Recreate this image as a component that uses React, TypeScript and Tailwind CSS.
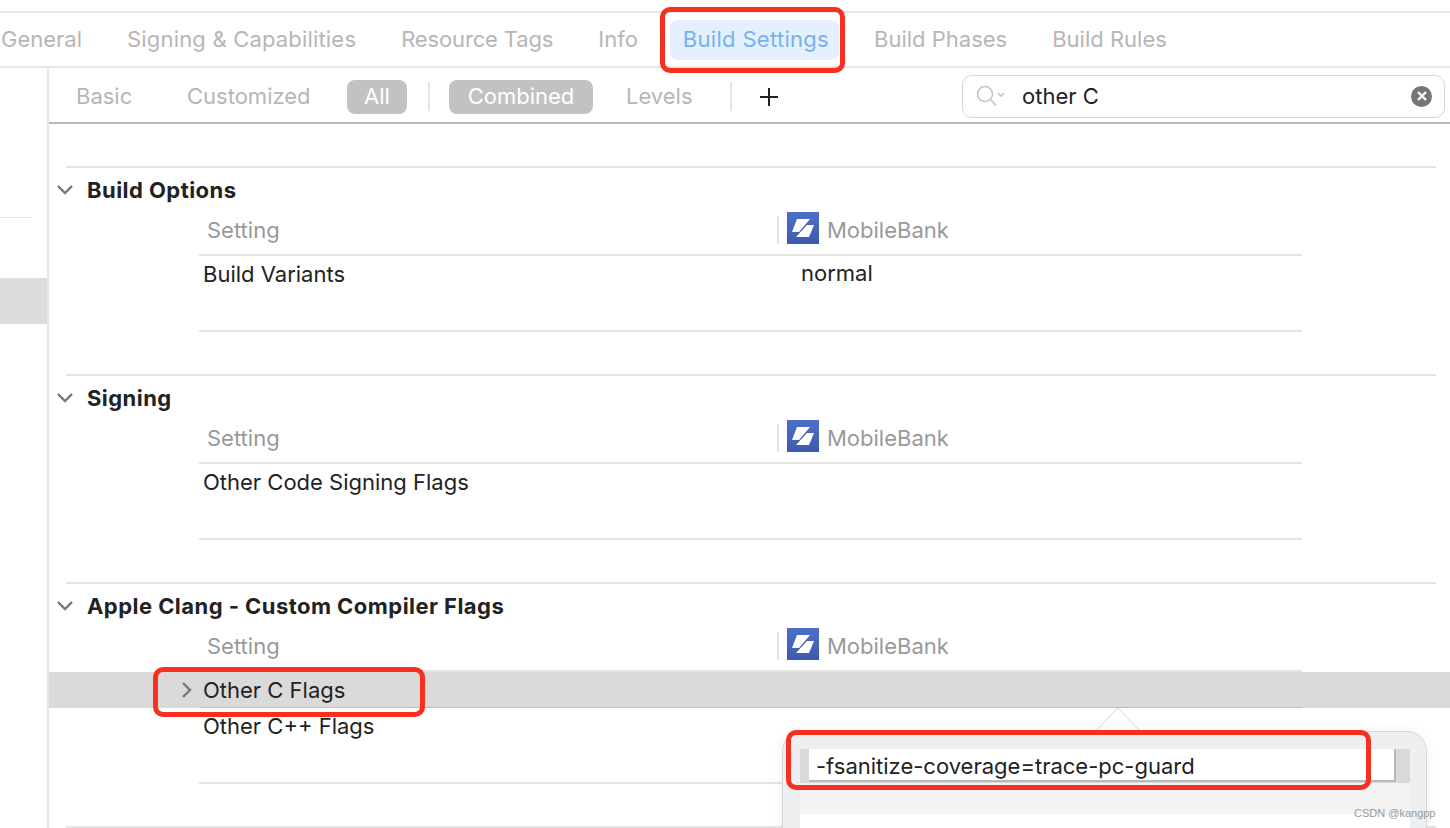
import React from "react";

const tabs = ["General", "Signing & Capabilities", "Resource Tags", "Info", "Build Settings", "Build Phases", "Build Rules"];

function Logo() {
  return (
    <svg width="32" height="32" viewBox="0 0 32 32" className="shrink-0">
      <defs>
        <linearGradient id="logo-bg" x1="0" y1="0" x2="0" y2="1">
          <stop offset="0" stopColor="#4c70c8" />
          <stop offset="1" stopColor="#3f5aae" />
        </linearGradient>
      </defs>
      <rect width="32" height="32" fill="url(#logo-bg)" />
      <path d="M10 7H23L12 20H5Z" fill="#fff" />
      <path d="M22 25H9L20 13H27Z" fill="#fff" />
    </svg>
  );
}

function Chevron({ open }: { open?: boolean }) {
  return (
    <svg width="18" height="18" viewBox="0 0 18 18" fill="none" stroke="#777" strokeWidth="2.4">
      {open ? <path d="M2 5l7 7 7-7" /> : <path d="M5 2l7 7-7 7" />}
    </svg>
  );
}

function TableHead() {
  return (
    <div className="ml-[150px] w-[1103px] h-[44px] pb-[6px] flex items-center border-b-2 border-[#e4e4e4] text-[#999]">
      <div className="w-[578px] pl-[8px]">Setting</div>
      <div className="w-[2px] h-[28px] bg-[#e4e4e4]" />
      <div className="ml-[8px] mr-[8px] -mt-[4px]">
        <Logo />
      </div>
      <div>MobileBank</div>
    </div>
  );
}

function Section({ title, children }: { title: string; children: React.ReactNode }) {
  return (
    <section className="mb-[43px]">
      <div className="-mt-[1px] mx-[17px] w-[1370px] border-t-2 border-[#e4e4e4] h-[46px] flex items-center font-bold tracking-[0.45px] text-[#222]">
        <div className="w-[31px] -ml-[10px] flex">
          <Chevron open />
        </div>
        {title}
      </div>
      <TableHead />
      {children}
    </section>
  );
}

function Row({ name, value }: { name: string; value?: string }) {
  return (
    <div className="ml-[150px] w-[1103px] h-[76px] pt-[4px] flex border-b-2 border-[#e4e4e4] text-[#222] leading-[28px]">
      <div className="w-[602px] pl-[4px]">{name}</div>
      {value && <div className="-mt-[1px]">{value}</div>}
    </div>
  );
}

function tabClass(t: string) {
  if (t === "Build Settings")
    return "pl-[13px] pr-[10px] mr-[3px] h-[40px] flex items-center rounded-[8px] bg-[#e4f0fd] text-[#79b1ef] tracking-[0.3px]";
  if (t === "Signing & Capabilities") return "px-[13px] h-[40px] flex items-center tracking-[0.18px]";
  if (t === "Resource Tags") return "px-[13px] h-[40px] flex items-center tracking-[-0.15px]";
  return "px-[13px] h-[40px] flex items-center";
}

export default function App() {
  return (
    <div className="relative h-[828px] w-[1450px] overflow-hidden bg-white font-['Inter','Liberation_Sans',sans-serif] text-[22px]">
      <div className="h-[11px]" />
      <nav className="h-[57px] border-y-2 border-[#e6e6e6] flex items-center gap-[19px] -ml-[12px] text-[#b6b6b6]">
        {tabs.map((t) => (
          <div key={t} className={tabClass(t)}>
            {t}
          </div>
        ))}
      </nav>
      <div className="flex h-[760px]">
        <aside className="w-[49px] shrink-0 border-r-2 border-[#e6e6e6] pt-[149px]">
          <div className="w-[31px] border-t border-[#e4e4e4]" />
          <div className="mt-[60px] h-[46px] bg-[#dcdcdc]" />
        </aside>
        <main className="flex-1 min-w-0">
          <div className="h-[56px] pt-[2px] border-b-2 border-[#b9b9b9] flex items-center text-[#b6b6b6]">
            <div className="ml-[27px] w-[111px]">Basic</div>
            <div className="w-[160px]">Customized</div>
            <div className="mt-[2px] pb-[2px] w-[60px] h-[34px] rounded-[8px] bg-[#c2c2c3] text-white flex items-center justify-center">All</div>
            <div className="ml-[21px] w-[2px] h-[29px] bg-[#e6e6e6]" />
            <div className="mt-[2px] pb-[2px] ml-[19px] w-[144px] h-[34px] rounded-[8px] bg-[#c2c2c3] text-white flex items-center justify-center">Combined</div>
            <div className="ml-[33px] w-[104px]">Levels</div>
            <div className="w-[2px] h-[29px] bg-[#e6e6e6]" />
            <svg width="18" height="18" viewBox="0 0 18 18" className="mt-[2px] ml-[28px]" stroke="#222" strokeWidth="2">
              <path d="M9 0v18M0 9h18" />
            </svg>
            <div className="ml-[184px] w-[483px] h-[43px] rounded-[10px] border border-[#d6d6d6] flex items-center text-[#222]">
              <svg width="32" height="24" viewBox="0 0 32 24" className="ml-[12px] mr-[15px]" fill="none" stroke="#c4c4c4" strokeWidth="1.600">
                <circle cx="10" cy="10" r="7.500" />
                <path d="M15.500 15.500l5.500 6M23 9l3 3 3-3" />
              </svg>
              other C
              <div className="ml-auto mr-[12px] w-[21px] h-[21px] rounded-full bg-[#757575] flex items-center justify-center">
                <svg width="10" height="10" viewBox="0 0 10 10" stroke="#fff" strokeWidth="2.400">
                  <path d="M1 1l8 8M9 1l-8 8" />
                </svg>
              </div>
            </div>
          </div>
          <div className="pt-[43px]">
            <Section title="Build Options">
              <Row name="Build Variants" value="normal" />
            </Section>
            <Section title="Signing">
              <Row name="Other Code Signing Flags" />
            </Section>
            <Section title="Apple Clang - Custom Compiler Flags">
              <div className="h-[36px] bg-[#dadada]">
                <div className="relative ml-[150px] w-[1103px] h-[36px] pt-[2px] flex items-center border-b border-[#bdbdbd] text-[#222] pl-[4px]">
                  <div className="absolute -left-[21px] top-[9px]">
                    <Chevron />
                  </div>
                  Other C Flags
                </div>
              </div>
              <Row name="Other C++ Flags" />
            </Section>
            <div className="-mt-[1px] mx-[17px] w-[1370px] border-t-2 border-[#e4e4e4]" />
          </div>
        </main>
      </div>

      {/* value popover */}
      <svg width="46" height="26" viewBox="0 0 46 26" className="absolute left-[1095px] top-[707px]">
        <path d="M0 25L23 1l23 24" fill="#fff" stroke="#d4d4d4" />
      </svg>
      <div className="absolute left-[782px] top-[731px] w-[645px] h-[120px] rounded-[20px] border border-[#d6d6d6] bg-[#eeeff0] shadow-[0_0_12px_rgba(0,0,0,0.06)]">
        <div className="absolute left-[17px] top-[17px] w-[610px] h-[34px] bg-[#dadada]">
          <div className="ml-[9px] w-[587px] h-[33px] bg-white border-b-2 border-r-2 border-[#b8b8b8] pl-[7px] leading-[34px] text-[#222]">
            -fsanitize-coverage=trace-pc-guard
          </div>
        </div>
        <div className="absolute left-[17px] top-[51px] w-[610px] h-[31px] bg-[#f3f3f3]" />
        <div className="absolute left-[17px] top-[82px] w-[610px] h-[38px] bg-white" />
      </div>

      {/* red annotation boxes */}
      <div className="absolute left-[660px] top-[7px] w-[185px] h-[66px] rounded-[10px] border-[5px] border-[#f5301f]" />
      <div className="absolute left-[153px] top-[667px] w-[272px] h-[50px] rounded-[10px] border-[5px] border-[#f5301f]" />
      <div className="absolute left-[786px] top-[730px] w-[585px] h-[60px] rounded-[10px] border-[5px] border-[#f5301f]" />

      <div className="absolute left-[1354px] top-[805px] text-[11px] text-[#999] font-['Liberation_Sans',sans-serif]">CSDN @kangpp</div>
    </div>
  );
}
